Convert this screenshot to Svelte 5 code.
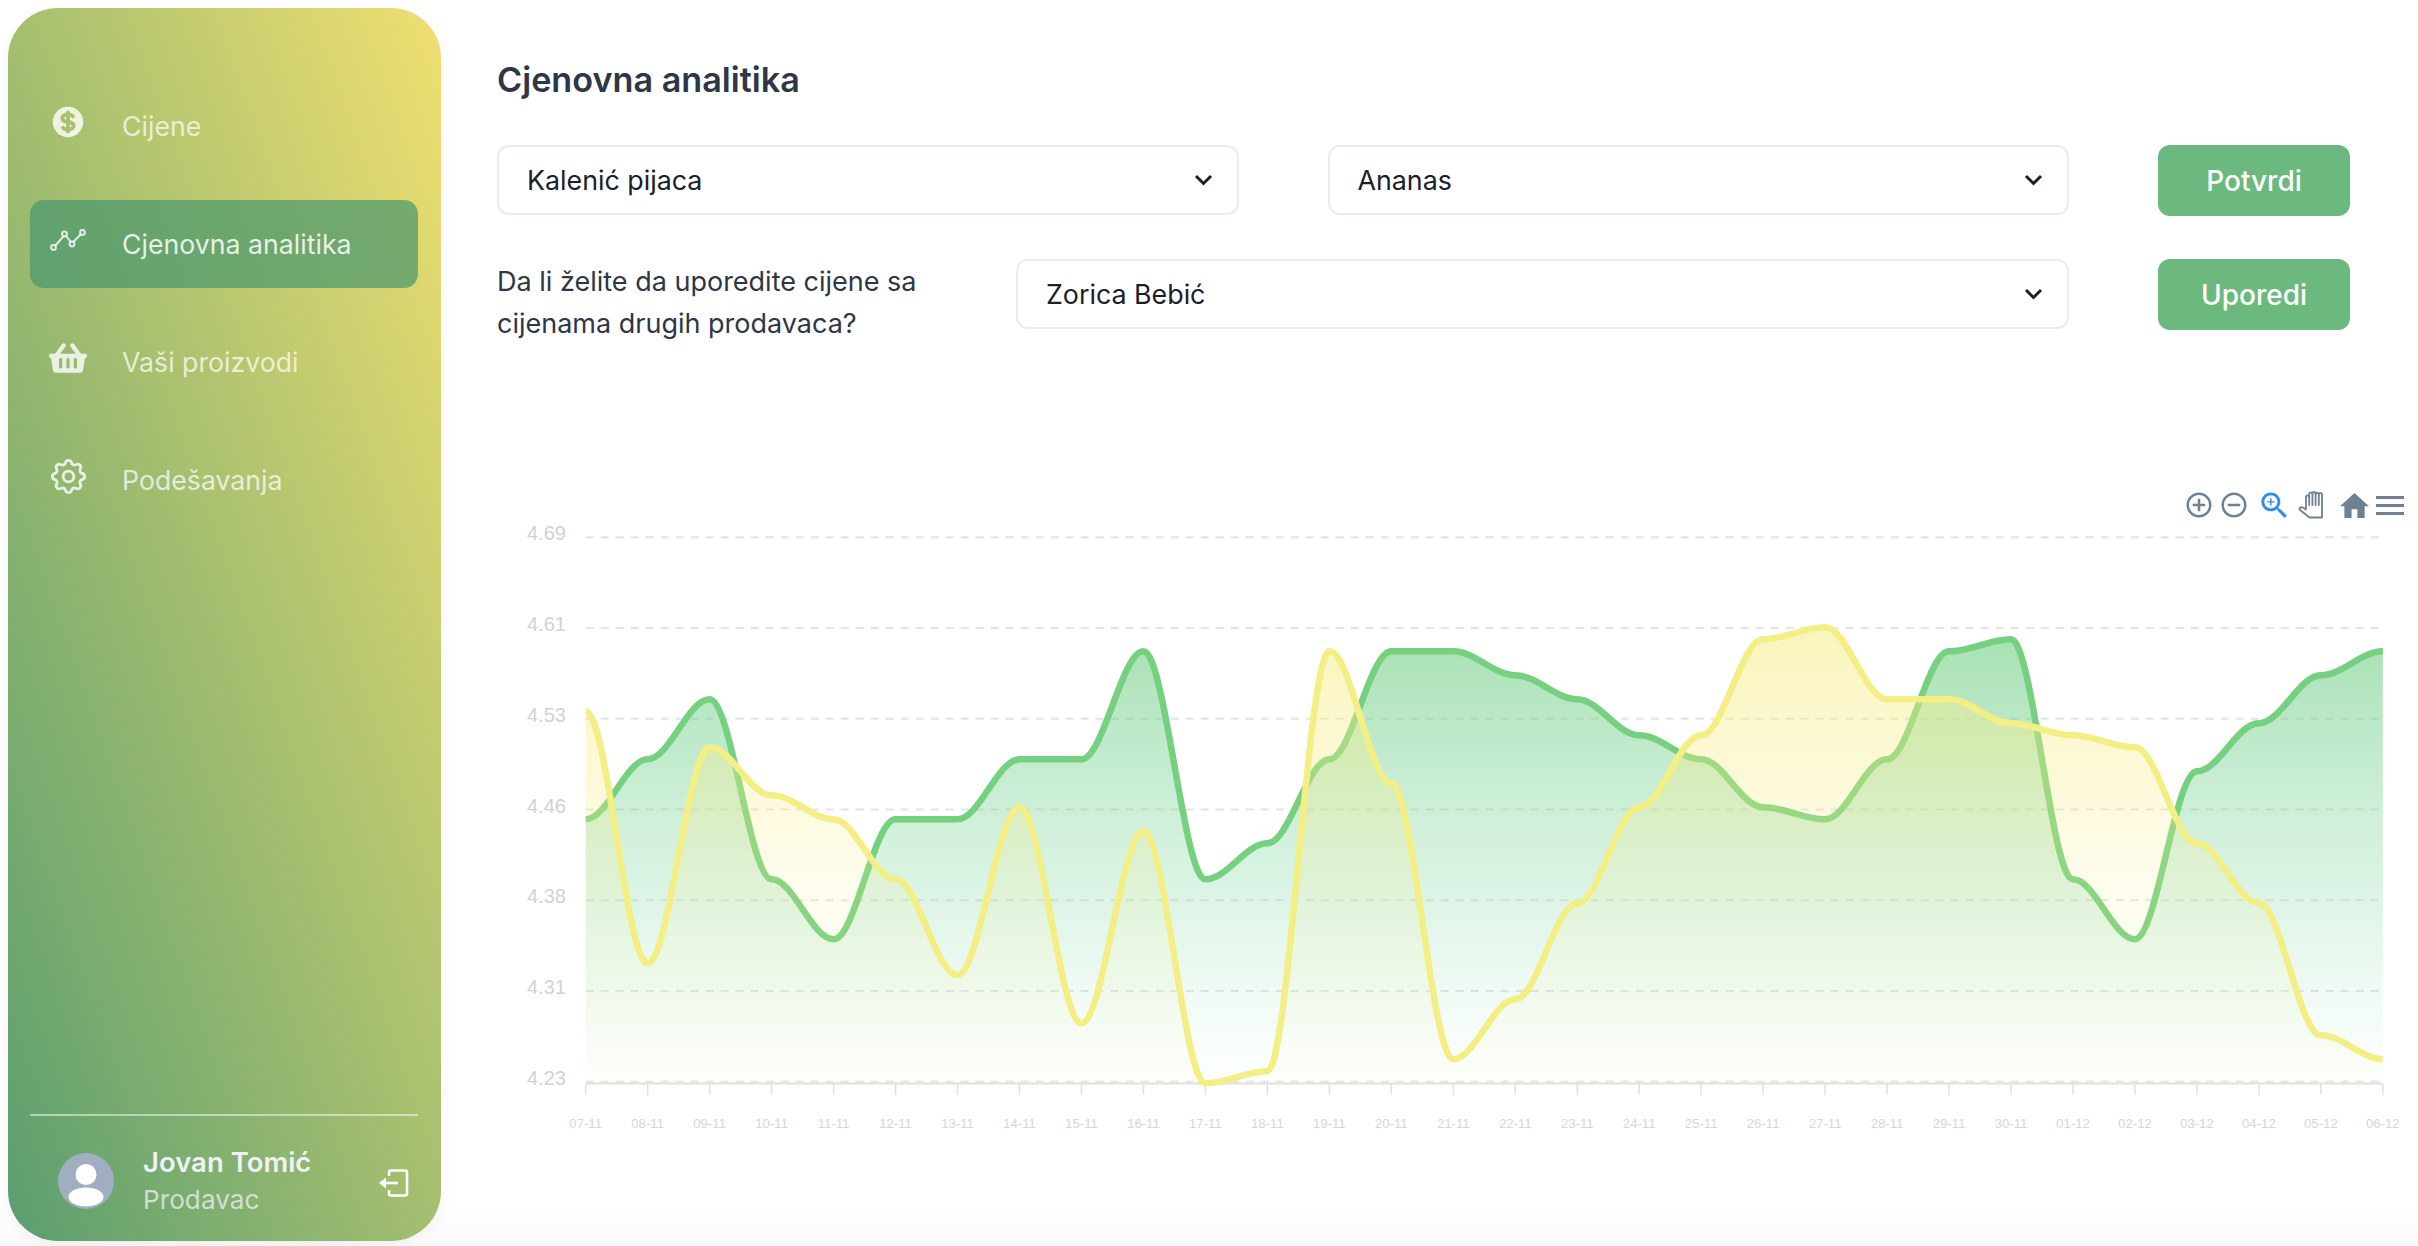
<script>
	// chart canvas starts at page x=497, y=510
	const LEFT = 88.7;
	const STEP = 61.97;
	const BASE = 572;
	const TOP = 27.3;
	const ROW = 90.75;

	const yLabels = ['4.69', '4.61', '4.53', '4.46', '4.38', '4.31', '4.23'];
	const days = [];
	for (let d = 7; d <= 30; d++) days.push(String(d).padStart(2, '0') + '-11');
	for (let d = 1; d <= 6; d++) days.push('0' + d + '-12');

	const green = [
		4.45, 4.5, 4.55, 4.4, 4.35, 4.45, 4.45, 4.5, 4.5, 4.59, 4.4, 4.43, 4.5, 4.59, 4.59, 4.57,
		4.55, 4.52, 4.5, 4.46, 4.45, 4.5, 4.59, 4.6, 4.4, 4.35, 4.49, 4.53, 4.57, 4.59
	];
	const yellow = [
		4.54, 4.33, 4.51, 4.47, 4.45, 4.4, 4.32, 4.46, 4.28, 4.44, 4.23, 4.24, 4.59, 4.48, 4.25, 4.3,
		4.38, 4.46, 4.52, 4.6, 4.61, 4.55, 4.55, 4.53, 4.52, 4.51, 4.43, 4.38, 4.27, 4.25
	];

	const px = (i) => LEFT + i * STEP;
	const py = (v) => 309.3 - (v - 4.45) * 1200;

	function line(data) {
		let d = `M${px(0)} ${py(data[0])}`;
		for (let i = 1; i < data.length; i++) {
			const k = STEP * 0.35;
			d += ` C${px(i - 1) + k} ${py(data[i - 1])} ${px(i) - k} ${py(data[i])} ${px(i)} ${py(data[i])}`;
		}
		return d;
	}
	const area = (data) => `${line(data)} L${px(data.length - 1)} ${BASE} L${px(0)} ${BASE} Z`;
</script>

<div class="page">
	<aside class="sidebar">
		<nav class="menu">
			<a class="item">
				<svg class="icon" width="38" height="38" viewBox="0 0 20 20" fill="currentColor">
					<path d="M8.433 7.418c.155-.103.346-.196.567-.267v1.698a2.305 2.305 0 01-.567-.267C8.07 8.34 8 8.114 8 8c0-.114.07-.34.433-.582zM11 12.849v-1.698c.22.071.412.164.567.267.364.243.433.468.433.582 0 .114-.07.34-.433.582a2.305 2.305 0 01-.567.267z" />
					<path fill-rule="evenodd" clip-rule="evenodd" d="M10 18a8 8 0 100-16 8 8 0 000 16zm1-13a1 1 0 10-2 0v.092a4.535 4.535 0 00-1.676.662C6.602 6.234 6 7.009 6 8c0 .99.602 1.765 1.324 2.246.48.32 1.054.545 1.676.662v1.941c-.391-.127-.68-.317-.843-.504a1 1 0 10-1.51 1.31c.562.649 1.413 1.076 2.353 1.253V15a1 1 0 102 0v-.092a4.535 4.535 0 001.676-.662C13.398 13.766 14 12.991 14 12c0-.99-.602-1.765-1.324-2.246A4.535 4.535 0 0011 9.092V7.151c.391.127.68.317.843.504a1 1 0 101.511-1.31c-.563-.649-1.413-1.076-2.354-1.253V5z" />
				</svg>
				<span>Cijene</span>
			</a>
			<a class="item active">
				<svg class="icon" width="38" height="38" viewBox="0 0 38 38" fill="none" stroke="currentColor" stroke-width="2">
					<path d="M6 25 16 13.5 23 22.5 33 12" />
					<circle cx="4.5" cy="26.5" r="2.4" fill="#6aa872" />
					<circle cx="15.5" cy="13" r="2.4" fill="#6aa872" />
					<circle cx="23" cy="23" r="2.4" fill="#6aa872" />
					<circle cx="33.5" cy="11.5" r="2.4" fill="#6aa872" />
				</svg>
				<span>Cjenovna analitika</span>
			</a>
			<a class="item">
				<svg class="icon" width="38" height="38" viewBox="0 0 576 512" fill="currentColor">
					<path d="M576 216v16c0 13.255-10.745 24-24 24h-8l-26.113 182.788C514.509 462.435 494.257 480 470.37 480H105.63c-23.887 0-44.139-17.565-47.518-41.212L32 256h-8c-13.255 0-24-10.745-24-24v-16c0-13.255 10.745-24 24-24h67.341l106.78-146.821c10.395-14.292 30.407-17.453 44.701-7.058 14.293 10.395 17.453 30.408 7.058 44.701L170.477 192h235.046L326.12 82.821c-10.395-14.292-7.234-34.306 7.059-44.701 14.291-10.395 34.306-7.235 44.701 7.058L484.659 192H552c13.255 0 24 10.745 24 24zM312 392V280c0-13.255-10.745-24-24-24s-24 10.745-24 24v112c0 13.255 10.745 24 24 24s24-10.745 24-24zm112 0V280c0-13.255-10.745-24-24-24s-24 10.745-24 24v112c0 13.255 10.745 24 24 24s24-10.745 24-24zm-224 0V280c0-13.255-10.745-24-24-24s-24 10.745-24 24v112c0 13.255 10.745 24 24 24s24-10.745 24-24z" />
				</svg>
				<span>Vaši proizvodi</span>
			</a>
			<a class="item">
				<svg class="icon cog" width="43" height="43" viewBox="0 0 24 24" fill="none" stroke="currentColor" stroke-width="1.6">
					<path d="M10.325 4.317c.426-1.756 2.924-1.756 3.35 0a1.724 1.724 0 002.573 1.066c1.543-.94 3.31.826 2.37 2.37a1.724 1.724 0 001.065 2.572c1.756.426 1.756 2.924 0 3.35a1.724 1.724 0 00-1.066 2.573c.94 1.543-.826 3.31-2.37 2.37a1.724 1.724 0 00-2.572 1.065c-.426 1.756-2.924 1.756-3.35 0a1.724 1.724 0 00-2.573-1.066c-1.543.94-3.31-.826-2.37-2.37a1.724 1.724 0 00-1.065-2.572c-1.756-.426-1.756-2.924 0-3.35a1.724 1.724 0 001.066-2.573c-.94-1.543.826-3.31 2.37-2.37.996.608 2.296.07 2.572-1.065z" />
					<path d="M15 12a3 3 0 11-6 0 3 3 0 016 0z" />
				</svg>
				<span>Podešavanja</span>
			</a>
		</nav>

		<div class="user">
			<div class="avatar">
				<svg width="56" height="56" viewBox="0 0 56 56" fill="#fff">
					<circle cx="28" cy="21.5" r="10.5" />
					<ellipse cx="28" cy="44" rx="17.5" ry="9.5" />
				</svg>
			</div>
			<div class="who">
				<div class="name">Jovan Tomić</div>
				<div class="role">Prodavac</div>
			</div>
			<svg class="logout" width="32" height="28" viewBox="0 0 32 28" fill="none" stroke="#fff" stroke-width="2.6">
				<path d="M11 7V3.5A2 2 0 0 1 13 1.5h14a2 2 0 0 1 2 2v21a2 2 0 0 1-2 2H13a2 2 0 0 1-2-2V21" />
				<path d="M6 14h14" />
				<path d="M1 14 8 8.5v11z" fill="#fff" stroke="none" />
			</svg>
		</div>
	</aside>

	<main class="content">
		<h1>Cjenovna analitika</h1>

		<div class="row first">
			<div class="select">
				<span>Kalenić pijaca</span>
				<svg width="20" height="14" viewBox="0 0 20 14" fill="none" stroke="#1a202c" stroke-width="3"><path d="M2 3l7.5 7.5L17 3" /></svg>
			</div>
			<div class="select">
				<span>Ananas</span>
				<svg width="20" height="14" viewBox="0 0 20 14" fill="none" stroke="#1a202c" stroke-width="3"><path d="M2 3l7.5 7.5L17 3" /></svg>
			</div>
			<button>Potvrdi</button>
		</div>

		<div class="row second">
			<p>Da li želite da uporedite cijene sa cijenama drugih prodavaca?</p>
			<div class="select">
				<span>Zorica Bebić</span>
				<svg width="20" height="14" viewBox="0 0 20 14" fill="none" stroke="#1a202c" stroke-width="3"><path d="M2 3l7.5 7.5L17 3" /></svg>
			</div>
			<button>Uporedi</button>
		</div>

		<div class="chart">
			<div class="toolbar">
				<svg class="plus" width="30" height="30" viewBox="0 0 24 24" fill="#6e8192"><path d="M13 7h-2v4H7v2h4v4h2v-4h4v-2h-4V7zm-1-5C6.48 2 2 6.48 2 12s4.48 10 10 10 10-4.48 10-10S17.52 2 12 2zm0 18c-4.41 0-8-3.59-8-8s3.59-8 8-8 8 3.59 8 8-3.59 8-8 8z" /></svg>
				<svg class="minus" width="30" height="30" viewBox="0 0 24 24" fill="#6e8192"><path d="M7 11v2h10v-2H7zm5-9C6.48 2 2 6.48 2 12s4.48 10 10 10 10-4.48 10-10S17.52 2 12 2zm0 18c-4.41 0-8-3.59-8-8s3.59-8 8-8 8 3.59 8 8-3.59 8-8 8z" /></svg>
				<svg class="zoom" width="35" height="35" viewBox="0 0 24 24" fill="#2a8cf7">
					<path d="M15.5 14h-.79l-.28-.27C15.41 12.59 16 11.11 16 9.5 16 5.91 13.09 3 9.5 3S3 5.91 3 9.5 5.91 16 9.5 16c1.61 0 3.09-.59 4.23-1.57l.27.28v.79l5 4.99L20.49 19l-4.99-5zm-6 0C7.01 14 5 11.99 5 9.5S7.01 5 9.5 5 14 7.01 14 9.5 11.99 14 9.5 14z" />
					<path d="M12 10h-2v2H9v-2H7V9h2V7h1v2h2v1z" />
				</svg>
				<svg class="hand" width="28" height="28" viewBox="0 0 28 28" fill="none" stroke="#6e8192" stroke-width="1.8" stroke-linejoin="round" stroke-linecap="round">
					<path d="M8 17V6a1.6 1.6 0 0 1 3.2 0V3a1.6 1.6 0 0 1 3.2 0V2.6a1.6 1.6 0 0 1 3.2 0V3.5a1.6 1.6 0 0 1 3.2 0 1.6 1.6 0 0 1 3.2 0V26.5H11.5L1.8 18.8c-1-1.2 1-3.4 3-2.2L8 18.6" />
					<path d="M11.2 5V14M14.4 3V14M17.6 3.5V14M20.8 4V14" />
				</svg>
				<svg class="home" width="29" height="25" viewBox="2 3 20 17" fill="#6e8192" preserveAspectRatio="none"><path d="M10 20v-6h4v6h5v-8h3L12 3 2 12h3v8z" /></svg>
				<svg class="bars" width="28" height="19" viewBox="0 0 28 19" fill="#6e8192">
					<rect width="28" height="3" y="0" />
					<rect width="28" height="3" y="8" />
					<rect width="28" height="3" y="16" />
				</svg>
			</div>

			<svg class="plot" width="1920" height="630" viewBox="0 0 1920 630">
				<defs>
					<linearGradient id="greenFill" gradientUnits="userSpaceOnUse" x1="0" y1="120" x2="0" y2="572">
						<stop offset="0" stop-color="#6fce80" stop-opacity="0.62" />
						<stop offset="0.6" stop-color="#8fdcae" stop-opacity="0.3" />
						<stop offset="1" stop-color="#a8e6c4" stop-opacity="0.02" />
					</linearGradient>
					<linearGradient id="yellowFill" gradientUnits="userSpaceOnUse" x1="0" y1="118" x2="0" y2="572">
						<stop offset="0" stop-color="#f4ec84" stop-opacity="0.55" />
						<stop offset="0.6" stop-color="#f6ee90" stop-opacity="0.15" />
						<stop offset="1" stop-color="#f8f2a0" stop-opacity="0.03" />
					</linearGradient>
				</defs>

				{#each yLabels as label, i}
					<line class="grid" x1={LEFT} x2={px(29)} y1={TOP + i * ROW} y2={TOP + i * ROW} />
					<text class="ylabel" x="30" y={TOP + i * ROW + 3}>{label}</text>
				{/each}

				<line class="axis" x1={LEFT} x2={px(29)} y1={BASE + 1.5} y2={BASE + 1.5} />
				{#each days as day, i}
					<line class="tick" x1={px(i)} x2={px(i)} y1={BASE + 2} y2={BASE + 13} />
					<text class="xlabel" x={px(i)} y={BASE + 46}>{day}</text>
				{/each}

				<path d={area(green)} fill="url(#greenFill)" />
				<path d={line(green)} class="stroke" stroke="#75d07f" />
				<path d={area(yellow)} fill="url(#yellowFill)" />
				<path d={line(yellow)} class="stroke" stroke="#f3ef85" />
			</svg>
		</div>
	</main>
</div>

<style>
	:global(body) {
		margin: 0;
		background: #fff;
		overflow: hidden;
	}

	.page {
		display: flex;
		height: 1246px;
		font-family: Inter, 'Liberation Sans', sans-serif;
		background: linear-gradient(to bottom, #fff 1205px, #fafafa 1246px);
	}

	.sidebar {
		display: flex;
		flex-direction: column;
		flex: none;
		width: 433px;
		height: 1233px;
		margin: 8px 0 0 8px;
		padding: 74px 23px 0 22px;
		box-sizing: border-box;
		border-radius: 50px;
		background: linear-gradient(to top right, #5a9e6f, #f0df70);
		box-shadow: 0 4px 14px rgba(0, 0, 0, 0.05);
	}

	.menu {
		display: flex;
		flex-direction: column;
		gap: 30px;
	}

	.item {
		display: flex;
		align-items: center;
		height: 88px;
		padding-left: 19px;
		gap: 35px;
		border-radius: 14px;
		font-size: 26.7px;
		color: rgba(255, 255, 255, 0.72);
	}

	.item.active {
		background: rgba(72, 151, 110, 0.7);
		color: rgba(255, 255, 255, 0.85);
	}

	.icon {
		flex: none;
		margin-bottom: 8px;
		color: rgba(255, 255, 255, 0.8);
	}

	.cog {
		margin: 0 -2.5px 8px;
	}

	.user {
		display: flex;
		align-items: center;
		margin-top: auto;
		height: 120px;
		border-top: 2px solid rgba(255, 255, 255, 0.5);
		padding: 5px 8px 0 28px;
		box-sizing: content-box;
	}

	.avatar {
		flex: none;
		width: 56px;
		height: 56px;
		border-radius: 50%;
		overflow: hidden;
		background: #a1aec0;
	}

	.avatar svg {
		display: block;
	}

	.who {
		margin-left: 29px;
		flex: 1;
	}

	.name {
		font-size: 27.5px;
		font-weight: 600;
		line-height: 38px;
		color: #edf2f7;
	}

	.role {
		font-size: 26.2px;
		line-height: 38px;
		color: rgba(237, 242, 247, 0.75);
	}

	.logout {
		margin-top: 4px;
	}

	.content {
		flex: 1;
		min-width: 0;
		padding: 0 68px 0 56px;
	}

	h1 {
		margin: 55px 0 0;
		font-size: 34.2px;
		line-height: 50px;
		font-weight: 600;
		color: #2d3748;
	}

	.row {
		display: grid;
		gap: 89px;
		align-items: start;
	}

	.row.first {
		grid-template-columns: 1fr 1fr 192px;
		margin-top: 40px;
	}

	.row.second {
		grid-template-columns: 430px 1fr 192px;
		margin-top: 43px;
	}

	.select {
		display: flex;
		align-items: center;
		justify-content: space-between;
		height: 70px;
		box-sizing: border-box;
		padding: 0 23px 0 28px;
		border: 2px solid #e8edf4;
		border-radius: 12px;
		font-size: 26.8px;
		color: #1a202c;
	}

	button {
		height: 71px;
		border: 0;
		border-radius: 12px;
		background: #6bb97f;
		color: #fff;
		font-family: inherit;
		font-size: 28px;
		font-weight: 500;
	}

	p {
		margin: 2px 0 0;
		font-size: 27px;
		line-height: 42px;
		color: #2d3748;
	}

	.chart {
		margin: 145px -68px 0 0;
	}

	.toolbar {
		display: flex;
		align-items: center;
		justify-content: flex-end;
		height: 30px;
		padding-right: 14px;
	}

	.minus {
		margin-left: 5px;
	}

	.zoom {
		margin-left: 8px;
	}

	.hand {
		margin-left: 6px;
	}

	.home {
		margin-left: 14px;
	}

	.bars {
		margin-left: 7px;
	}

	.plot {
		display: block;
		margin-top: -10px;
	}

	.grid {
		stroke: #e4e4e4;
		stroke-width: 2;
		stroke-dasharray: 8 7;
	}

	.axis {
		stroke: #e0e0e0;
		stroke-width: 2;
	}

	.tick {
		stroke: #e0e0e0;
		stroke-width: 1.5;
	}

	.ylabel {
		font-family: 'Liberation Sans', sans-serif;
		font-size: 20px;
		fill: #d2d2d2;
	}

	.xlabel {
		font-family: 'Liberation Sans', sans-serif;
		font-size: 13.2px;
		fill: #d6d6d6;
		text-anchor: middle;
	}

	.stroke {
		fill: none;
		stroke-width: 6.5;
	}
</style>
